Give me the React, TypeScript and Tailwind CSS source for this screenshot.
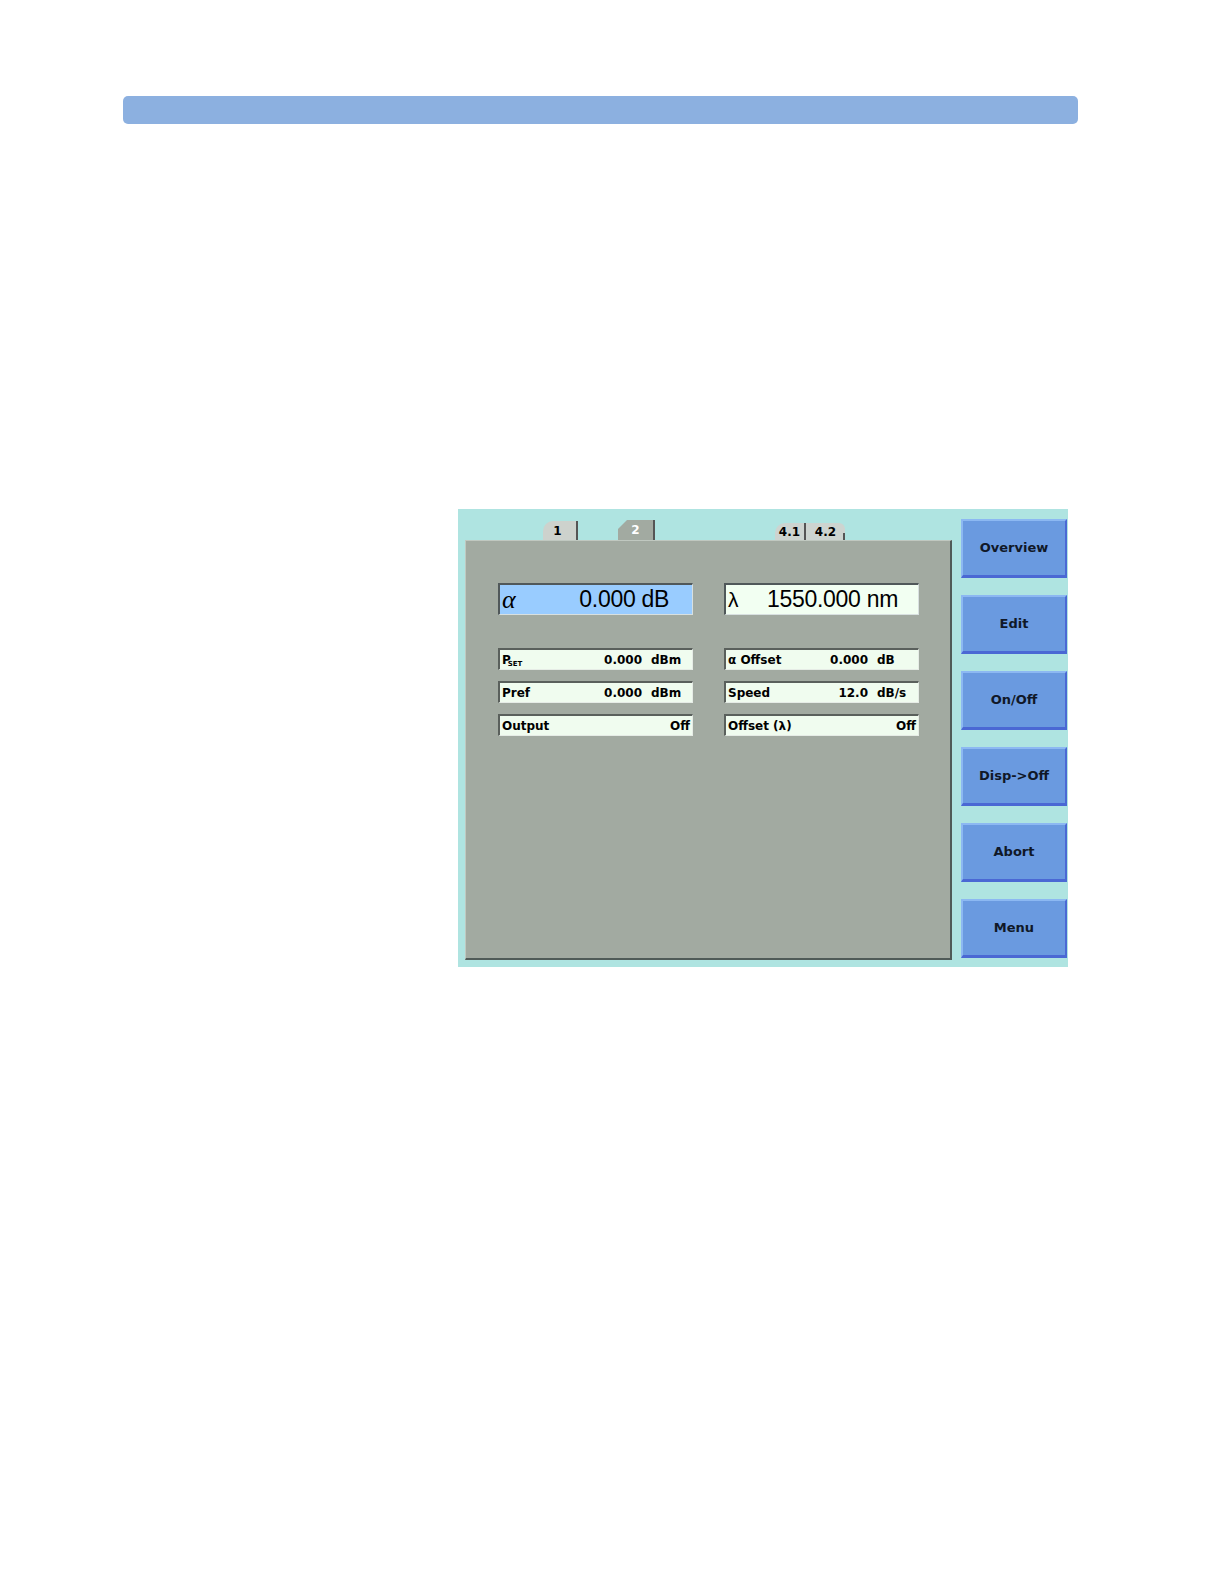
import React from 'react'

const ui = { fontFamily: '"DejaVu Sans", "Liberation Sans", sans-serif' }
const big = { fontFamily: '"Liberation Sans", Arial, sans-serif' }

type Row = { label: React.ReactNode; value?: string; unit?: string; off?: boolean }

const leftRows: Row[] = [
  {
    label: (
      <span className="flex items-end leading-none">
        P<span className="text-[7px] -ml-[3px] mb-[-2px]">SET</span>
      </span>
    ),
    value: '0.000',
    unit: 'dBm',
  },
  { label: 'Pref', value: '0.000', unit: 'dBm' },
  { label: 'Output', off: true },
]

const rightRows: Row[] = [
  { label: <span>α Offset</span>, value: '0.000', unit: 'dB' },
  { label: 'Speed', value: '12.0', unit: 'dB/s' },
  { label: 'Offset (λ)', off: true },
]

const buttons = ['Overview', 'Edit', 'On/Off', 'Disp->Off', 'Abort', 'Menu']

function SmallField({ row }: { row: Row }) {
  return (
    <div
      className="flex items-center h-[22px] w-[195px] bg-[#f0fcef] border-t-2 border-l-2 border-[#5a605c] border-b border-r border-b-[#e6ece6] border-r-[#e6ece6] pl-[2px] pr-[2px] text-[12px] font-bold text-black leading-none"
      style={ui}
    >
      <div className="flex-1">{row.label}</div>
      {row.off ? (
        <span>Off</span>
      ) : (
        <>
          <span>{row.value}</span>
          <span className="w-[48px] pl-[9px]">{row.unit}</span>
        </>
      )}
    </div>
  )
}

function Column({ rows }: { rows: Row[] }) {
  return (
    <div className="flex flex-col gap-[11px]">
      {rows.map((r, i) => (
        <SmallField key={i} row={r} />
      ))}
    </div>
  )
}

export default function App() {
  return (
    <div className="w-full h-screen overflow-hidden bg-white pt-[96px]">
      <div className="ml-[123px] w-[955px] h-[28px] rounded-[5px] bg-[#8cb0e0]" />

      <div className="ml-[458px] mt-[385px] w-[610px] h-[458px] bg-[#afe4e1] flex">
        {/* tabs + panel */}
        <div className="pl-[7px] flex flex-col">
          <div className="h-[31px] flex items-end pl-[78px] text-[12px] font-bold leading-none" style={ui}>
            <div className="w-[35px] h-[19px] bg-[#cdd2cd] border-r-2 border-[#555] rounded-tl-[10px] flex items-center justify-center pr-[4px] text-black">
              1
            </div>
            <div className="ml-[40px] w-[37px] h-[20px] bg-[#a2aaa1] border-r-2 border-[#555] [clip-path:polygon(9px_0,100%_0,100%_100%,0_100%,0_9px)] flex items-center justify-center text-white">
              2
            </div>
            <div className="ml-[120px] w-[31px] h-[17px] bg-[#cdd4d0] rounded-tl-[10px] border-r-2 border-[#555] flex items-center justify-center text-black">
              4.1
            </div>
            <div className="w-[39px] h-[17px] bg-[#cdd4d0] rounded-tr-[6px] flex items-center justify-center text-black relative">
              4.2
              <span className="absolute right-0 bottom-0 w-[2px] h-[7px] bg-[#555]" />
            </div>
          </div>
          <div className="w-[487px] h-[420px] bg-[#a2aaa1] border-t border-l border-[#c0c8c0] border-b-2 border-r-2 border-b-[#505b58] border-r-[#505b58] pt-[42px] pl-[32px]">
            <div className="flex gap-[31px]">
              <div
                className="h-[32px] w-[195px] bg-[#99ccff] border-t-2 border-l-2 border-[#50585a] border-b border-r border-b-[#d8e0e0] border-r-[#d8e0e0] flex items-center pl-[2px] pr-[23px] text-black leading-none"
                style={big}
              >
                <span className="text-[26px] italic" style={{ fontFamily: '"Liberation Serif", serif' }}>
                  α
                </span>
                <span className="flex-1 text-right text-[23px] tracking-[-0.3px]">0.000 dB</span>
              </div>
              <div
                className="h-[32px] w-[195px] bg-[#f2fff2] border-t-2 border-l-2 border-[#50585a] border-b border-r border-b-[#d8e0e0] border-r-[#d8e0e0] flex items-center pl-[2px] pr-[20px] text-black leading-none"
                style={big}
              >
                <span className="text-[21px]">λ</span>
                <span className="flex-1 text-right text-[23px] tracking-[-0.3px]">1550.000 nm</span>
              </div>
            </div>
            <div className="flex gap-[31px] mt-[33px]">
              <Column rows={leftRows} />
              <Column rows={rightRows} />
            </div>
          </div>
        </div>

        {/* softkeys */}
        <div className="ml-[9px] pt-[10px] flex flex-col gap-[17px]">
          {buttons.map((b) => (
            <div
              key={b}
              className="w-[106px] h-[59px] bg-[#6a9ae0] border-t-2 border-l-2 border-[#8cb8f2] border-b-[3px] border-r-2 border-b-[#4a68d4] border-r-[#4a68d4] flex items-center justify-center text-[13px] font-bold text-[#101828]"
              style={ui}
            >
              {b}
            </div>
          ))}
        </div>
      </div>
    </div>
  )
}
